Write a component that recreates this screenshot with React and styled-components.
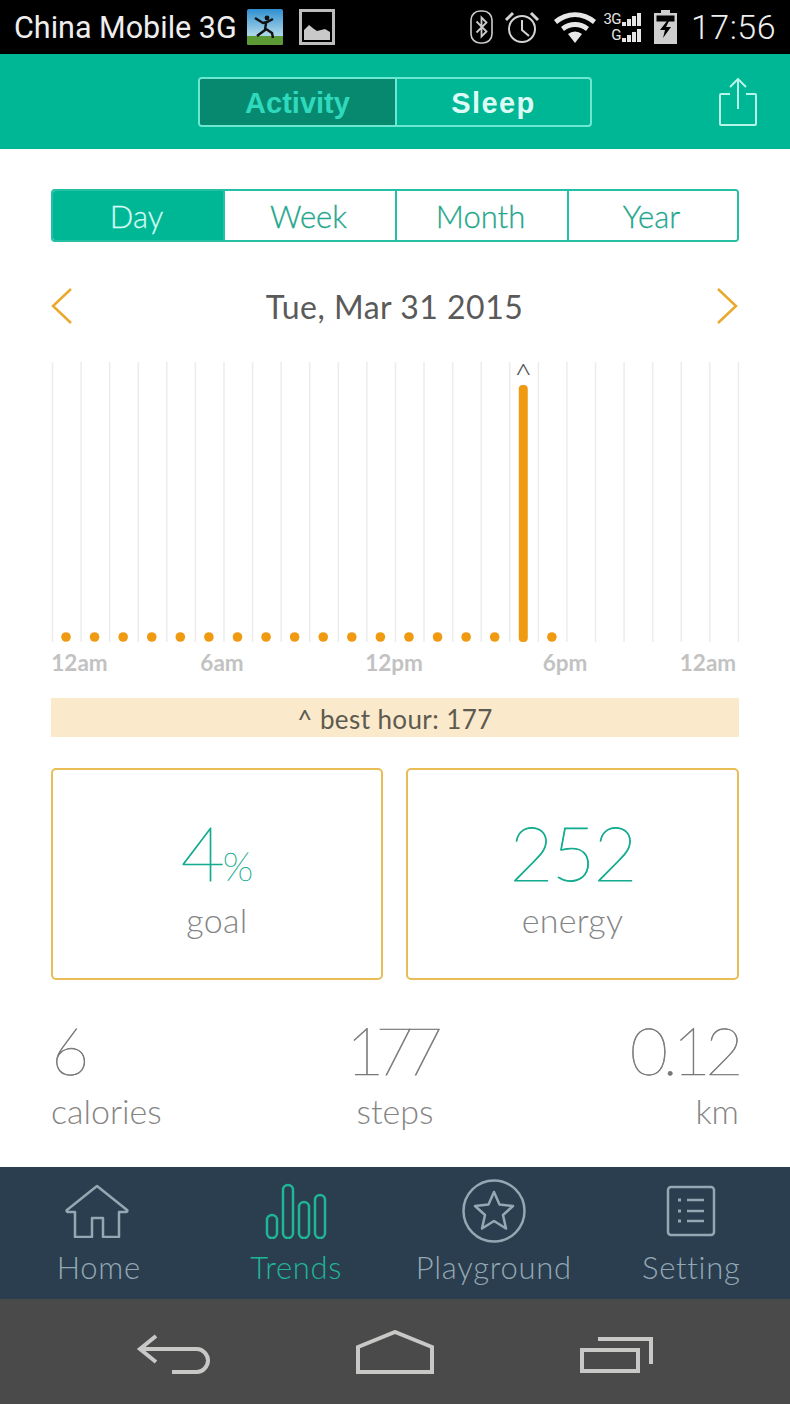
import React from 'react';
import styled, { createGlobalStyle } from 'styled-components';

const GlobalStyle = createGlobalStyle`
  * { box-sizing: border-box; }
  html, body { margin: 0; padding: 0; background: #fff; }
`;

const TEAL = '#00b795';
const ORANGE = '#f09a12';

const Phone = styled.div`
  width: 790px;
  height: 1404px;
  display: flex;
  flex-direction: column;
  overflow: hidden;
  font-family: Lato, "Liberation Sans", sans-serif;
`;

const StatusBar = styled.div`
  height: 54px;
  flex: none;
  background: #000;
  color: #eee;
  display: flex;
  align-items: center;
  justify-content: space-between;
  padding: 0 14px;
  font-family: Roboto, "Liberation Sans", sans-serif;
`;

const StatusGroup = styled.div`
  display: flex;
  align-items: center;
`;

const Carrier = styled.span`
  font-size: 30.5px;
  margin-right: 10px;
`;

const Clock = styled.span`
  font-size: 34px;
  font-weight: 300;
  letter-spacing: 0.5px;
  margin-left: 14px;
`;

const Header = styled.div`
  height: 95px;
  flex: none;
  background: ${TEAL};
  display: grid;
  grid-template-columns: 1fr 394px 1fr;
  align-items: center;
  padding-top: 1px;
`;

const Segments = styled.div`
  grid-column: 2;
  height: 50px;
  display: grid;
  grid-template-columns: 1fr 1fr;
  border: 2px solid #6ce8d2;
  border-radius: 4px;
  overflow: hidden;
`;

const Segment = styled.div`
  display: flex;
  align-items: center;
  justify-content: center;
  padding-top: 3px;
  font-family: "Liberation Sans", sans-serif;
  font-weight: 700;
  font-size: 29px;
  letter-spacing: ${(p) => (p.$active ? '0' : '1.4px')};
  color: ${(p) => (p.$active ? '#2fd9bd' : '#dcfbf4')};
  background: ${(p) => (p.$active ? '#07896f' : 'transparent')};
  border-left: ${(p) => (p.$active ? 'none' : '2px solid #6ce8d2')};
`;

const ShareSlot = styled.div`
  display: flex;
  justify-content: flex-end;
  padding-right: 33px;
`;

const Main = styled.div`
  flex: 1;
  background: #fff;
  padding: 40px 51px 0;
`;

const Periods = styled.div`
  height: 53px;
  display: grid;
  grid-template-columns: 170px 172px 172px 1fr;
  border: 2px solid #25bfa3;
  border-radius: 4px;
  overflow: hidden;
`;

const Period = styled.div`
  display: flex;
  align-items: center;
  justify-content: center;
  padding-right: 3px;
  font-size: 31px;
  font-weight: 300;
  color: ${(p) => (p.$active ? '#d4fbf3' : '#1fa68c')};
  background: ${(p) => (p.$active ? TEAL : '#fff')};
  border-left: ${(p) => (p.$first ? 'none' : '2px solid #25bfa3')};
  -webkit-text-stroke: 0.3px currentColor;
`;

const DateRow = styled.div`
  height: 40px;
  margin-top: 44px;
  padding-right: 1px;
  display: flex;
  align-items: center;
  justify-content: space-between;
  color: #5a5a5a;
  font-size: 32px;
  letter-spacing: 0.5px;
`;

const Chart = styled.svg`
  display: block;
  margin-top: 35px;
  overflow: visible;
`;

const AxisRow = styled.div`
  height: 26px;
  margin-top: 7px;
  display: grid;
  grid-template-columns: 57px 228px 116px 226px 60px;
`;

const AxisLabel = styled.div`
  text-align: center;
  white-space: nowrap;
  font-size: 22.5px;
  line-height: 26px;
  font-weight: 700;
  color: #c2c2c2;
`;

const BestHour = styled.div`
  height: 39px;
  margin-top: 22px;
  padding-top: 2px;
  background: #fbe9cb;
  color: #5d5a4f;
  font-size: 26px;
  display: flex;
  align-items: center;
  justify-content: center;
  letter-spacing: 0.4px;
`;

const Cards = styled.div`
  margin-top: 31px;
  display: grid;
  grid-template-columns: 332px 333px;
  justify-content: space-between;
`;

const Card = styled.div`
  height: 212px;
  border: 2px solid #e8bd55;
  border-radius: 5px;
  display: flex;
  flex-direction: column;
  align-items: center;
  padding-top: 39px;
`;

const CardValue = styled.div`
  font-size: 76px;
  line-height: 86px;
  font-weight: 100;
  color: #12ab8e;
  letter-spacing: -2px;
  -webkit-text-stroke: 0.8px currentColor;
`;

const Percent = styled.span`
  font-size: 40px;
  line-height: 1;
  letter-spacing: 0;
  -webkit-text-stroke: 0.4px currentColor;
`;

const CardLabel = styled.div`
  margin-top: 5px;
  font-size: 34px;
  line-height: 40px;
  font-weight: 300;
  letter-spacing: 0.3px;
  color: #858585;
`;

const Stats = styled.div`
  margin-top: 32px;
  display: grid;
  grid-template-columns: 1fr 1fr 1fr;
`;

const Stat = styled.div`
  display: flex;
  flex-direction: column;
  align-items: ${(p) => p.$align};
`;

const StatValue = styled.div`
  font-size: 66px;
  line-height: 76px;
  font-weight: 100;
  color: #777;
  letter-spacing: ${(p) => p.$tight}px;
  margin-right: ${(p) => p.$trail}px;
  -webkit-text-stroke: 0.6px currentColor;
`;

const StatLabel = styled.div`
  margin-top: 3px;
  font-size: 34px;
  line-height: 40px;
  font-weight: 300;
  color: #858585;
`;

const TabBar = styled.div`
  height: 132px;
  flex: none;
  background: #2b3e4f;
  display: grid;
  grid-template-columns: repeat(4, 1fr);
`;

const Tab = styled.div`
  display: flex;
  flex-direction: column;
  align-items: center;
  padding-top: 12px;
  color: ${(p) => (p.$active ? '#1fb598' : '#94a8b3')};
`;

const TabLabel = styled.div`
  font-size: 31px;
  line-height: 38px;
  margin-top: 5px;
  font-weight: 300;
  letter-spacing: 0.7px;
`;

const SystemNav = styled.div`
  height: 105px;
  flex: none;
  background: #4a4a4a;
  display: flex;
  align-items: center;
  padding-left: 136px;
`;

const PhotoThumb = () => (
  <svg width="36" height="36" viewBox="0 0 36 36">
    <defs>
      <linearGradient id="sky" x1="0" y1="0" x2="0" y2="1">
        <stop offset="0" stopColor="#2f8fd0" />
        <stop offset="0.7" stopColor="#a9d5e8" />
      </linearGradient>
    </defs>
    <rect width="36" height="36" rx="2" fill="url(#sky)" />
    <path d="M0 27h36v7a2 2 0 0 1-2 2H2a2 2 0 0 1-2-2z" fill="#5c9a36" />
    <circle cx="20" cy="9" r="2.4" fill="#111" />
    <path d="M8 9l8 5 4-1 6-3M19 14l-1 7-8 6M19 20l6 4 1 5" stroke="#111" strokeWidth="2.4" fill="none" />
  </svg>
);

const PictureIcon = () => (
  <svg width="36" height="36" viewBox="0 0 36 36" style={{ marginLeft: 16 }}>
    <rect x="1.5" y="1.5" width="33" height="33" fill="none" stroke="#bdbdbd" strokeWidth="3" />
    <path d="M5 31V21l5-5 5 4 3 2 4-1 4-1 5 3v8z" fill="#c9c9c9" />
  </svg>
);

const BluetoothIcon = () => (
  <svg width="23" height="34" viewBox="0 0 23 34" fill="none" stroke="#ccc">
    <rect x="1" y="1" width="21" height="32" rx="9" strokeWidth="1.6" />
    <path d="M6.5 11.5l10 10-5 5V7.500l5 5-10 10" strokeWidth="1.8" />
  </svg>
);

const AlarmIcon = () => (
  <svg width="36" height="34" viewBox="0 0 36 34" fill="none" stroke="#d4d4d4" style={{ marginLeft: 11 }}>
    <circle cx="18" cy="19" r="13" strokeWidth="2" />
    <path d="M18 10v10l7 6" strokeWidth="2" />
    <path d="M2 10 9 3M34 10l-7-7" strokeWidth="3" />
  </svg>
);

const WifiIcon = () => (
  <svg width="42" height="32" viewBox="0 0 42 32" style={{ marginLeft: 14 }}>
    <path d="M21 32l-7-9a11 11 0 0 1 14 0z" fill="#e8e8e8" />
    <path d="M0 9a32 32 0 0 1 42 0l-3 4a27 27 0 0 0-36 0zM7 16a22 22 0 0 1 28 0l-3 4a17 17 0 0 0-22 0z" fill="#e8e8e8" />
  </svg>
);

const SignalBlock = styled.div`
  width: 40px;
  margin-left: 5px;
  font-size: 15px;
  line-height: 15px;
  letter-spacing: -0.6px;
  color: #e6e6e6;
  display: flex;
  flex-direction: column;
  align-items: flex-end;
  gap: 1px;
`;

const SignalRow = styled.div`
  display: flex;
  align-items: flex-end;
  gap: 1px;
`;

const Bar = styled.i`
  display: block;
  width: 4px;
  height: ${(p) => p.$h}px;
  margin-bottom: 1px;
  background: #e6e6e6;
`;

const Signal = ({ label }) => (
  <SignalRow>
    {label}
    {[4, 7, 10, 13].map((h) => (
      <Bar key={h} $h={h} />
    ))}
  </SignalRow>
);

const BatteryIcon = () => (
  <svg width="23" height="34" viewBox="0 0 23 34" style={{ marginLeft: 13 }}>
    <path d="M7 0h9v3h7v31H0V3h7z" fill="#cfcfcf" />
    <rect x="2.500" y="5.500" width="18" height="6" fill="#000" />
    <path d="M13 11 6 20h5l-2 8 8-11h-5l3-6z" fill="#000" />
  </svg>
);

const ShareIcon = () => (
  <svg width="38" height="48" viewBox="0 0 38 48" fill="none" stroke="#b6f5e9" strokeWidth="2">
    <path d="M11 16H2a1 1 0 0 0-1 1v29a1 1 0 0 0 1 1h34a1 1 0 0 0 1-1V17a1 1 0 0 0-1-1h-9" />
    <path d="M19 31V2M11 9l8-8 8 8" />
  </svg>
);

const Chevron = ({ flip }) => (
  <svg width="22" height="36" viewBox="0 0 22 36" fill="none" stroke="#eaa92c" strokeWidth="2.500">
    <path d={flip ? 'M2 1l18 17L2 35' : 'M20 1L2 18l18 17'} />
  </svg>
);

const ActivityChart = () => {
  const step = 28.58;
  const lines = Array.from({ length: 25 }, (_, i) => 1.5 + i * step);
  const dots = Array.from({ length: 18 }, (_, i) => 15 + i * step);
  return (
    <Chart width="688" height="282" viewBox="0 0 688 282">
      {lines.map((x) => (
        <line key={x} x1={x} x2={x} y1="1" y2="281" stroke="#ececec" strokeWidth="1.500" />
      ))}
      {dots.map((x, i) =>
        i === 16 ? null : <circle key={x} cx={x} cy="276" r="4.800" fill={ORANGE} />
      )}
      <rect x={dots[16] - 4.5} y="24" width="9" height="257" rx="4" fill={ORANGE} />
      <text x={dots[16]} y="25" textAnchor="middle" fontSize="32" fontWeight="300" fontFamily="Lato, sans-serif" fill="#555">^</text>
    </Chart>
  );
};

const HomeIcon = () => (
  <svg width="64" height="54" viewBox="0 0 64 54" fill="none" stroke="currentColor" strokeWidth="2.500" strokeLinejoin="round" style={{ marginRight: 3 }}>
    <path d="M32 2 2 26c-1 1 0 2 1 2h7v25h17V34h11v19h16V28h7c1 0 2-1 1-2z" />
  </svg>
);

const TrendsIcon = () => (
  <svg width="62" height="56" viewBox="0 0 62 56" fill="none" stroke="currentColor" strokeWidth="2.500">
    <rect x="2" y="32" width="10" height="23" rx="5" />
    <rect x="18" y="2" width="10" height="53" rx="5" />
    <rect x="34" y="19" width="10" height="36" rx="5" />
    <rect x="50" y="12" width="10" height="43" rx="5" />
  </svg>
);

const PlaygroundIcon = () => (
  <svg width="64" height="64" viewBox="0 0 64 64" fill="none" stroke="currentColor" strokeWidth="2.500">
    <circle cx="32" cy="32" r="30.500" />
    <path d="M32 13l5.500 12.500 13.500 1.500-10 9 3 13.500L32 42l-12 7.500 3-13.500-10-9 13.500-1.500z" strokeLinejoin="round" />
  </svg>
);

const SettingIcon = () => (
  <svg width="50" height="52" viewBox="0 0 50 52" fill="none" stroke="currentColor" strokeWidth="2.500">
    <rect x="2" y="2" width="46" height="48" rx="3" />
    <path d="M21 15h17M21 26h17M21 36h17" />
    <path d="M12 15h3M12 26h3M12 36h3" strokeWidth="3" />
  </svg>
);

const IconSlot = styled.div`
  height: 64px;
  display: flex;
  align-items: center;
  justify-content: center;
`;

const BackIcon = () => (
  <svg width="76" height="44" viewBox="0 0 76 44" fill="none" stroke="#c8c8c6" strokeWidth="4" style={{ marginRight: 144 }}>
    <path d="M20 6 4 19l16 13M4 19h57c6 0 11 6 11 11.500S67 42 61 42H36" />
  </svg>
);

const NavHomeIcon = () => (
  <svg width="78" height="44" viewBox="0 0 78 44" fill="none" stroke="#c8c8c6" strokeWidth="4" style={{ marginRight: 146 }}>
    <path d="M2 17 39 2l37 15v25H2z" />
  </svg>
);

const RecentsIcon = () => (
  <svg width="73" height="36" viewBox="0 0 73 36" fill="none" stroke="#c8c8c6" strokeWidth="4" style={{ marginTop: 6 }}>
    <rect x="2" y="13" width="56" height="21" />
    <path d="M18 2h53v25" />
  </svg>
);

const App = () => (
  <Phone>
    <GlobalStyle />
    <StatusBar>
      <StatusGroup>
        <Carrier>China Mobile 3G</Carrier>
        <PhotoThumb />
        <PictureIcon />
      </StatusGroup>
      <StatusGroup>
        <BluetoothIcon />
        <AlarmIcon />
        <WifiIcon />
        <SignalBlock>
          <Signal label="3G" />
          <Signal label="G" />
        </SignalBlock>
        <BatteryIcon />
        <Clock>17:56</Clock>
      </StatusGroup>
    </StatusBar>

    <Header>
      <Segments>
        <Segment $active>Activity</Segment>
        <Segment>Sleep</Segment>
      </Segments>
      <ShareSlot>
        <ShareIcon />
      </ShareSlot>
    </Header>

    <Main>
      <Periods>
        <Period $active $first>Day</Period>
        <Period>Week</Period>
        <Period>Month</Period>
        <Period>Year</Period>
      </Periods>

      <DateRow>
        <Chevron />
        <span>Tue, Mar 31 2015</span>
        <Chevron flip />
      </DateRow>

      <ActivityChart />

      <AxisRow>
        {['12am', '6am', '12pm', '6pm', '12am'].map((t, i) => (
          <AxisLabel key={i}>{t}</AxisLabel>
        ))}
      </AxisRow>

      <BestHour>^ best hour: 177</BestHour>

      <Cards>
        <Card>
          <CardValue>4<Percent>%</Percent></CardValue>
          <CardLabel>goal</CardLabel>
        </Card>
        <Card>
          <CardValue>252</CardValue>
          <CardLabel>energy</CardLabel>
        </Card>
      </Cards>

      <Stats>
        <Stat $align="flex-start">
          <StatValue $tight={-2} $trail={0}>6</StatValue>
          <StatLabel>calories</StatLabel>
        </Stat>
        <Stat $align="center">
          <StatValue $tight={-9} $trail={10}>177</StatValue>
          <StatLabel>steps</StatLabel>
        </Stat>
        <Stat $align="flex-end">
          <StatValue $tight={-5.5} $trail={1}>0.12</StatValue>
          <StatLabel>km</StatLabel>
        </Stat>
      </Stats>
    </Main>

    <TabBar>
      <Tab>
        <IconSlot><HomeIcon /></IconSlot>
        <TabLabel>Home</TabLabel>
      </Tab>
      <Tab $active>
        <IconSlot><TrendsIcon /></IconSlot>
        <TabLabel>Trends</TabLabel>
      </Tab>
      <Tab>
        <IconSlot><PlaygroundIcon /></IconSlot>
        <TabLabel>Playground</TabLabel>
      </Tab>
      <Tab>
        <IconSlot><SettingIcon /></IconSlot>
        <TabLabel>Setting</TabLabel>
      </Tab>
    </TabBar>

    <SystemNav>
      <BackIcon />
      <NavHomeIcon />
      <RecentsIcon />
    </SystemNav>
  </Phone>
);

export default App;
